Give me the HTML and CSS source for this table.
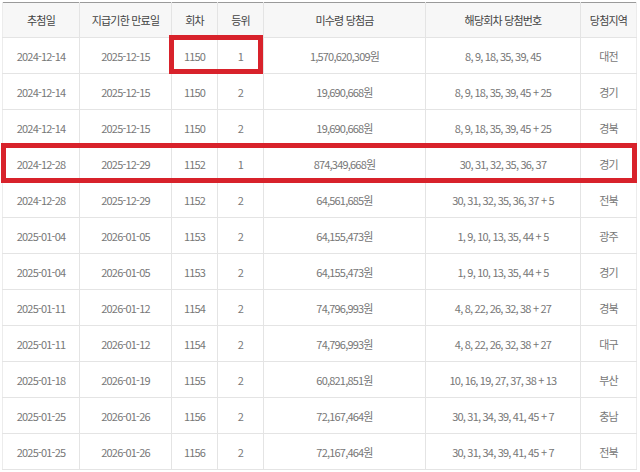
FILE: index.html
```html
<!DOCTYPE html>
<html lang="ko">
<head>
<meta charset="utf-8">
<link rel="stylesheet" href="styles.css">
</head>
<body>
<div class="wrap">
<table class="tbl">
<colgroup>
<col class="c1"><col class="c2"><col class="c3"><col class="c4"><col class="c5"><col class="c6"><col class="c7">
</colgroup>
<thead>
<tr><th>추첨일</th><th>지급기한 만료일</th><th>회차</th><th>등위</th><th>미수령 당첨금</th><th>해당회차 당첨번호</th><th>당첨지역</th></tr>
</thead>
<tbody>
<tr><td>2024-12-14</td><td>2025-12-15</td><td>1150</td><td>1</td><td>1,570,620,309원</td><td>8, 9, 18, 35, 39, 45</td><td>대전</td></tr>
<tr><td>2024-12-14</td><td>2025-12-15</td><td>1150</td><td>2</td><td>19,690,668원</td><td>8, 9, 18, 35, 39, 45 + 25</td><td>경기</td></tr>
<tr><td>2024-12-14</td><td>2025-12-15</td><td>1150</td><td>2</td><td>19,690,668원</td><td>8, 9, 18, 35, 39, 45 + 25</td><td>경북</td></tr>
<tr><td>2024-12-28</td><td>2025-12-29</td><td>1152</td><td>1</td><td>874,349,668원</td><td>30, 31, 32, 35, 36, 37</td><td>경기</td></tr>
<tr><td>2024-12-28</td><td>2025-12-29</td><td>1152</td><td>2</td><td>64,561,685원</td><td>30, 31, 32, 35, 36, 37 + 5</td><td>전북</td></tr>
<tr><td>2025-01-04</td><td>2026-01-05</td><td>1153</td><td>2</td><td>64,155,473원</td><td>1, 9, 10, 13, 35, 44 + 5</td><td>광주</td></tr>
<tr><td>2025-01-04</td><td>2026-01-05</td><td>1153</td><td>2</td><td>64,155,473원</td><td>1, 9, 10, 13, 35, 44 + 5</td><td>경기</td></tr>
<tr><td>2025-01-11</td><td>2026-01-12</td><td>1154</td><td>2</td><td>74,796,993원</td><td>4, 8, 22, 26, 32, 38 + 27</td><td>경북</td></tr>
<tr><td>2025-01-11</td><td>2026-01-12</td><td>1154</td><td>2</td><td>74,796,993원</td><td>4, 8, 22, 26, 32, 38 + 27</td><td>대구</td></tr>
<tr><td>2025-01-18</td><td>2026-01-19</td><td>1155</td><td>2</td><td>60,821,851원</td><td>10, 16, 19, 27, 37, 38 + 13</td><td>부산</td></tr>
<tr><td>2025-01-25</td><td>2026-01-26</td><td>1156</td><td>2</td><td>72,167,464원</td><td>30, 31, 34, 39, 41, 45 + 7</td><td>충남</td></tr>
<tr><td>2025-01-25</td><td>2026-01-26</td><td>1156</td><td>2</td><td>72,167,464원</td><td>30, 31, 34, 39, 41, 45 + 7</td><td>전북</td></tr>
</tbody>
</table>
<div class="mark mark-a"></div>
<div class="mark mark-b"></div>
</div>
</body>
</html>
```
FILE: styles.css
```css
html, body {
  margin: 0;
  padding: 0;
  background: #fff;
}
.wrap {
  position: relative;
  padding: 2px 4px 0 2px;
  width: 634px;
}
.tbl {
  width: 634px;
  border-collapse: collapse;
  table-layout: fixed;
  border-top: 1px solid #9a9a9a;
  font-family: "Noto Sans CJK KR", "Noto Sans", sans-serif;
  font-size: 11px;
  letter-spacing: -0.8px;
}
.c1 { width: 77px; }
.c2 { width: 92px; }
.c3 { width: 46px; }
.c4 { width: 46px; }
.c5 { width: 162px; }
.c6 { width: 155px; }
.c7 { width: 56px; }
.tbl th {
  height: 34px;
  padding: 0;
  background: #f7f7f7;
  color: #444;
  font-weight: 400;
  text-align: center;
  border: 1px solid #e4e4e4;
  border-top: 0;
}
.tbl td {
  height: 35px;
  padding: 0;
  color: #777;
  text-align: center;
  border: 1px solid #e4e4e4;
}
.tbl tr > :first-child { border-left-color: #ececec; }
.tbl tr > :last-child { border-right-color: #ececec; }
.mark {
  position: absolute;
  border: 5px solid #d8222b;
  box-sizing: border-box;
}
.mark-a {
  left: 169px;
  top: 35px;
  width: 94px;
  height: 39px;
}
.mark-b {
  left: 1px;
  top: 143px;
  width: 636px;
  height: 40px;
}
```
